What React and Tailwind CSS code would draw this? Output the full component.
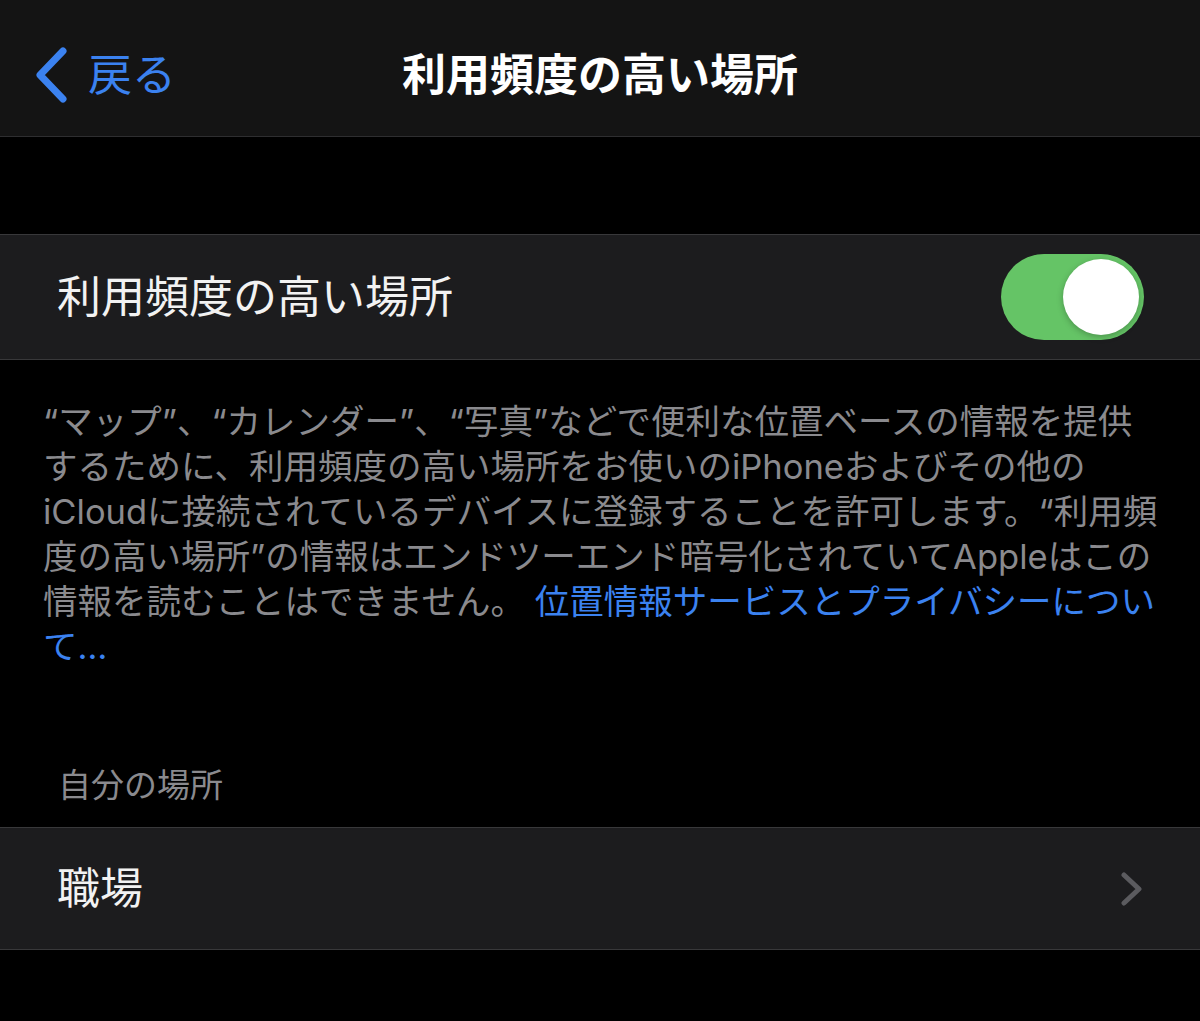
import React from 'react';

const font = { fontFamily: 'Inter, "Noto Sans CJK JP", sans-serif' };

const BackChevron = () => (
  <svg width="34" height="56" viewBox="0 0 34 56" fill="none">
    <path d="M29 4 L6 28 L29 52" stroke="#3b82f0" strokeWidth="7" strokeLinecap="round" strokeLinejoin="round" />
  </svg>
);

const RowChevron = () => (
  <svg width="22" height="34" viewBox="0 0 22 34" fill="none">
    <path d="M3 3 L18 17 L3 31" stroke="#5b5b5f" strokeWidth="5" strokeLinecap="round" strokeLinejoin="round" />
  </svg>
);

const Toggle = () => (
  <div className="w-[143px] h-[86px] rounded-full bg-[#65c466] flex items-center justify-end pr-[5px]">
    <div className="w-[76px] h-[76px] rounded-full bg-white shadow-[0_2px_6px_rgba(0,0,0,0.25)]" />
  </div>
);

export default function App() {
  return (
    <div className="w-[1200px] h-[1021px] bg-black overflow-hidden text-white" style={font}>
      {/* Nav bar */}
      <div className="h-[137px] pt-[14px] bg-[#141414] border-b border-[#2e2e30] flex items-center relative">
        <div className="flex items-center pl-[34px] gap-[20px]">
          <BackChevron />
          <span className="text-[44px] text-[#3b82f0] leading-none">戻る</span>
        </div>
        <div className="absolute inset-0 pt-[14px] flex items-center justify-center pointer-events-none">
          <span className="text-[44px] font-bold leading-none">利用頻度の高い場所</span>
        </div>
      </div>

      <div className="h-[97px]" />

      {/* Toggle row */}
      <div className="h-[126px] bg-[#1c1c1e] border-y border-[#38383a] flex items-center justify-between pl-[57px] pr-[56px]">
        <span className="text-[44px] text-[#f2f2f2] leading-none">利用頻度の高い場所</span>
        <Toggle />
      </div>

      {/* Description */}
      <div className="pt-[39px] pl-[43px] text-[34.5px] leading-[45px] text-[#8a8a8e] whitespace-nowrap">
        <div>“マップ”、“カレンダー”、“写真”などで便利な位置ベースの情報を提供</div>
        <div>するために、利用頻度の高い場所をお使いのiPhoneおよびその他の</div>
        <div>iCloudに接続されているデバイスに登録することを許可します。“利用頻</div>
        <div>度の高い場所”の情報はエンドツーエンド暗号化されていてAppleはこの</div>
        <div>
          情報を読むことはできません。 <span className="text-[#3b82f0]">位置情報サービスとプライバシーについ</span>
        </div>
        <div className="text-[#3b82f0]">て…</div>
      </div>

      {/* Section header */}
      <div className="mt-[94px] pb-[19px] pl-[58px] text-[33px] leading-[45px] text-[#8a8a8e]">自分の場所</div>

      {/* Work row */}
      <div className="h-[123px] bg-[#1c1c1e] border-y border-[#38383a] flex items-center justify-between pl-[57px] pr-[57px]">
        <span className="text-[43px] text-[#f2f2f2] leading-none">職場</span>
        <RowChevron />
      </div>
    </div>
  );
}
